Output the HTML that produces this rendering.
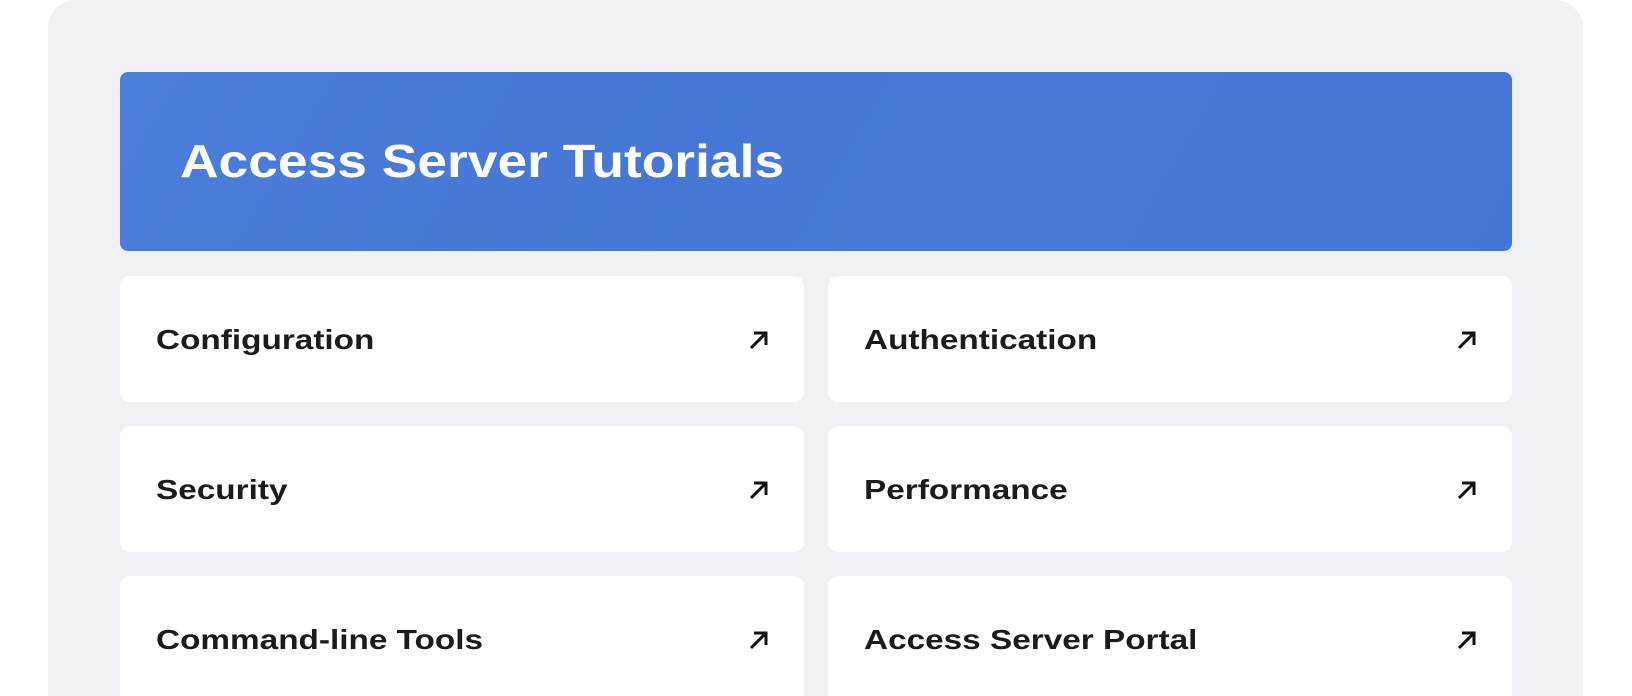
<!DOCTYPE html>
<html><head><style>
html,body{margin:0;width:1632px;height:696px;background:#fff;overflow:hidden;font-family:"Liberation Sans",sans-serif;}
.wrap{position:relative;width:1632px;height:696px;overflow:hidden;}
.outer{position:absolute;left:48px;top:0;width:1535px;height:696px;background:#eff1f5;border-radius:28px 28px 0 0;}
.banner{position:absolute;left:120px;top:72px;width:1392px;height:179px;border-radius:8px;background:linear-gradient(120deg,#4c7edb 0%,#4677d6 40%,#4a7bdc 60%,#4676d5 100%);overflow:hidden;}
.banner h1{margin:0;position:absolute;left:60px;top:62px;color:#fff;font-size:46px;font-weight:bold;transform:scaleX(1.16);transform-origin:left;white-space:nowrap;}
.card{position:absolute;width:684px;height:126px;background:#fff;border-radius:10px;}
.card span{position:absolute;left:36px;top:64px;transform:translateY(-50%) scaleX(1.19);transform-origin:left;font-size:28px;font-weight:bold;color:#1b1b1f;white-space:nowrap;}
.card svg{position:absolute;right:34px;top:53px;}
.last{height:120px;border-radius:10px 10px 0 0;}
</style></head><body><div class="wrap">
<div class="outer"></div>
<div class="banner"><h1>Access Server Tutorials</h1></div>
<div class="card" style="left:120px;top:276px"><span>Configuration</span><svg width="22" height="22" viewBox="0 0 22 22"><path d="M3 19L18 4M6 4H18V16" stroke="#111" stroke-width="3" fill="none"/></svg></div>
<div class="card" style="left:828px;top:276px"><span>Authentication</span><svg width="22" height="22" viewBox="0 0 22 22"><path d="M3 19L18 4M6 4H18V16" stroke="#111" stroke-width="3" fill="none"/></svg></div>
<div class="card" style="left:120px;top:426px"><span>Security</span><svg width="22" height="22" viewBox="0 0 22 22"><path d="M3 19L18 4M6 4H18V16" stroke="#111" stroke-width="3" fill="none"/></svg></div>
<div class="card" style="left:828px;top:426px"><span>Performance</span><svg width="22" height="22" viewBox="0 0 22 22"><path d="M3 19L18 4M6 4H18V16" stroke="#111" stroke-width="3" fill="none"/></svg></div>
<div class="card last" style="left:120px;top:576px"><span>Command-line Tools</span><svg width="22" height="22" viewBox="0 0 22 22"><path d="M3 19L18 4M6 4H18V16" stroke="#111" stroke-width="3" fill="none"/></svg></div>
<div class="card last" style="left:828px;top:576px"><span>Access Server Portal</span><svg width="22" height="22" viewBox="0 0 22 22"><path d="M3 19L18 4M6 4H18V16" stroke="#111" stroke-width="3" fill="none"/></svg></div>
</div></body></html>
